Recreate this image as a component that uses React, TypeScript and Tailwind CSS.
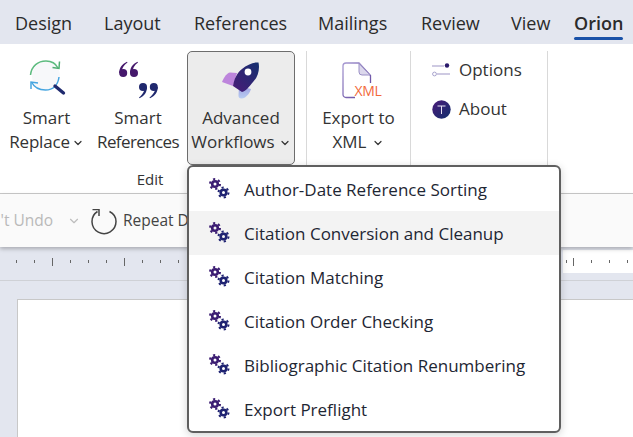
import { ChevronDown } from 'lucide-react';

const FONT = "font-['Open_Sans','Noto_Sans',sans-serif]";

const tabs = [
  { label: 'Design', cls: 'w-[89px]' },
  { label: 'Layout', cls: 'w-[90px]' },
  { label: 'References', cls: 'w-[124px]' },
  { label: 'Mailings', cls: 'w-[103px]' },
  { label: 'Review', cls: 'w-[90px]' },
  { label: 'View', cls: 'w-[63px]' },
];

const menuItems = [
  'Author-Date Reference Sorting',
  'Citation Conversion and Cleanup',
  'Citation Matching',
  'Citation Order Checking',
  'Bibliographic Citation Renumbering',
  'Export Preflight',
];

function Chevron({ className = 'ml-1' }: { className?: string }) {
  return <ChevronDown size={12} strokeWidth={2.4} className={`inline-block ${className}`} />;
}

function SmartReplaceIcon() {
  return (
    <svg width="40" height="40" viewBox="0 0 40 40">
      <circle cx="18" cy="18" r="14" fill="#f7f8fa" />
      <path d="M2.5 17C3.5 8 10 3 18 3c6 0 9.500 2 12 7" fill="none" stroke="#5dbb7f" strokeWidth="1.500" />
      <path d="M31.500 3.500 31 10.500 24.500 9.500" fill="none" stroke="#4fae72" strokeWidth="1.500" />
      <path d="M31 19c-1 8-6 13-13.500 13C11 32 6 29 3.500 24" fill="none" stroke="#46a5e0" strokeWidth="1.500" />
      <path d="M3 31 3 24 10 25" fill="none" stroke="#46a5e0" strokeWidth="1.500" />
      <path d="M27 28 35.500 35" stroke="#1f2a6e" strokeWidth="3.400" strokeLinecap="round" />
    </svg>
  );
}

function QuoteMark({ flip, fill }: { flip?: boolean; fill: string }) {
  return (
    <svg width="20" height="17" viewBox="0 0 20 17" style={{ transform: flip ? 'rotate(180deg)' : undefined }}>
      <circle cx="4.200" cy="12" r="4" fill={fill} />
      <path d="M8 .8C3 3 .2 7 .2 12H2.500C2.500 8 5 4 8.500 1.600Z" fill={fill} />
      <circle cx="15" cy="12" r="4" fill={fill} />
      <path d="M18.500 .8C13.500 3 11 7 11 12H13.300C13.300 8 15.500 4 19 1.600Z" fill={fill} />
    </svg>
  );
}

function RocketIcon() {
  return (
    <svg width="38" height="38" viewBox="0 0 38 38">
      <defs>
        <linearGradient id="rocketBody" x1="0" y1="1" x2="1" y2="0">
          <stop offset="0" stopColor="#4a1a78" />
          <stop offset="1" stopColor="#14306f" />
        </linearGradient>
        <linearGradient id="rocketWing" x1="0" y1="0" x2="0" y2="1">
          <stop offset="0" stopColor="#9d9fe0" />
          <stop offset="1" stopColor="#b9cdf2" />
        </linearGradient>
      </defs>
      <path d="M0 20C2 15 5 11 8 10.500L15 11 11 24Z" fill="#bd85dc" />
      <path d="M17 24 29 27C28 31 25 34 23 35.500 20 37 16 37 16.500 33Z" fill="url(#rocketWing)" />
      <path d="M36.500 .5C38 7 36 15 31 20 27 25 24 29 20 30L11 24C12 17 15 11 20 7 25 3 31 0 36.500 .5Z" fill="url(#rocketBody)" />
      <circle cx="26" cy="10" r="3.400" fill="#fff" />
    </svg>
  );
}

function XmlIcon() {
  return (
    <div className="relative w-[40px] h-[37px]">
      <svg width="30" height="37" viewBox="0 0 30 37" className="block">
        <defs>
          <linearGradient id="fileLine" x1="0" y1="0" x2="1" y2="1">
            <stop offset="0" stopColor="#a79ad2" />
            <stop offset="1" stopColor="#5b3f9a" />
          </linearGradient>
        </defs>
        <path d="M13 35.500H4a3 3 0 0 1-3-3V4a3 3 0 0 1 3-3h13l11.500 12.500V21" fill="none" stroke="url(#fileLine)" strokeWidth="1.300" />
        <path d="M17 1.500V10a3 3 0 0 0 3 3h8Z" fill="#dcd8ec" stroke="#9b90c6" strokeWidth="1" />
      </svg>
      <span className="absolute left-[13px] top-[20px] text-[14px] leading-[18px] tracking-[-0.3px] text-[#f2683a]">XML</span>
    </div>
  );
}

function OptionsIcon() {
  return (
    <svg width="18" height="14" viewBox="0 0 18 14">
      <path d="M0 3H12" stroke="#b3aed3" strokeWidth="1.300" />
      <circle cx="15" cy="2.500" r="2.200" fill="#2a1a6b" />
      <circle cx="2.500" cy="11" r="1.900" fill="#fff" stroke="#a8a3cd" strokeWidth="1" />
      <path d="M5 11H18" stroke="#b3aed3" strokeWidth="1.300" />
    </svg>
  );
}

function AboutIcon() {
  return (
    <svg width="19" height="19" viewBox="0 0 19 19">
      <defs>
        <linearGradient id="aboutFill" x1="0" y1="0" x2="1" y2="1">
          <stop offset="0" stopColor="#4a1a78" />
          <stop offset="1" stopColor="#12306e" />
        </linearGradient>
      </defs>
      <circle cx="9.500" cy="9.500" r="9.200" fill="url(#aboutFill)" />
      <path d="M5.500 6H13.500M9.500 6V14" stroke="#e6e3f2" strokeWidth="1" fill="none" />
    </svg>
  );
}

function GearsIcon() {
  return (
    <svg width="21" height="21" viewBox="0 0 21 21" className="mt-[-2px]">
      <g fill="none">
        <circle cx="6" cy="6" r="2.800" stroke="#3b1c72" strokeWidth="2.600" />
        <circle cx="6" cy="6" r="5" stroke="#3b1c72" strokeWidth="2" strokeDasharray="2.200 3.040" />
        <circle cx="14.500" cy="14.500" r="2.800" stroke="#1f2372" strokeWidth="2.600" />
        <circle cx="14.500" cy="14.500" r="5" stroke="#1f2372" strokeWidth="2" strokeDasharray="2.200 3.040" />
      </g>
    </svg>
  );
}

function RepeatIcon() {
  return (
    <svg width="26" height="26" viewBox="0 0 26 26">
      <path d="M18.500 2.500C22.500 4.500 25 8 25 12.500A12 12 0 1 1 6.500 2.500" fill="none" stroke="#444" strokeWidth="1.500" />
      <path d="M1.500 .5H8V7" fill="none" stroke="#444" strokeWidth="1.500" />
    </svg>
  );
}

function Tick({ tall }: { tall?: boolean }) {
  return <span className={tall ? 'w-px h-[8px] bg-[#666]' : 'w-px h-[3px] bg-[#666]'} />;
}

export default function App() {
  return (
    <div className={`${FONT} relative w-[633px] h-[437px] overflow-hidden bg-[#e3e6ef] text-[#2b2b2b]`}>
      {/* tabs */}
      <div className="h-[44px] flex items-center pl-[15px] pt-[2px] text-[18px]">
        {tabs.map((t) => (
          <span key={t.label} className={`${t.cls} whitespace-nowrap`}>{t.label}</span>
        ))}
        <div className="relative font-semibold whitespace-nowrap">
          Orion
          <span className="absolute left-0 right-0 bottom-[-3px] h-[3px] rounded-full bg-[#1a52a8]" />
        </div>
      </div>

      {/* ribbon */}
      <div className="h-[150px] bg-white border-b border-[#c9c9c9] flex pt-[7px] text-[17px] leading-[24px] text-center text-[#333]">
        <div className="w-[307px] flex flex-col border-r border-[#d9d9d9] h-[114px] pl-[4px]">
          <div className="flex gap-[3px] h-[114px] relative">
            <div className="w-[85px] flex flex-col items-center pt-[7px]">
              <div className="h-[48px] pl-[2px]"><SmartReplaceIcon /></div>
              <div>Smart</div>
              <div className="whitespace-nowrap tracking-[-0.2px]">Replace<Chevron className="ml-[2px]" /></div>
            </div>
            <div className="w-[92px] flex flex-col items-center pt-[10px]">
              <div className="h-[43px] w-[38px] relative">
                <div className="absolute left-0 top-0"><QuoteMark fill="#45186c" /></div>
                <div className="absolute left-[19px] top-[21px]"><QuoteMark flip fill="#20286e" /></div>
              </div>
              <div className="mt-[2px]">Smart</div>
              <div className="whitespace-nowrap tracking-[-0.6px]">References</div>
            </div>
            <div className="w-[108px] h-[114px] flex flex-col items-center bg-[#ececec] border border-[#6d6d6d] rounded-[5px] pt-[10px]">
              <div className="h-[43px]"><RocketIcon /></div>
              <div className="mt-[1px]">Advanced</div>
              <div className="whitespace-nowrap">Workflows<Chevron /></div>
            </div>
          </div>
          <div className="text-[15px] leading-[20px] mt-[4px] pr-[8px] w-[300px] text-[#333]">Edit</div>
        </div>
        <div className="w-[104px] h-[114px] flex flex-col items-center border-r border-[#d9d9d9] pt-[11px]">
          <div className="h-[43px] pl-[6px]"><XmlIcon /></div>
          <div className="mt-[1px]">Export to</div>
          <div className="whitespace-nowrap">XML<Chevron className="ml-[6px]" /></div>
        </div>
        <div className="w-[137px] h-[114px] border-r border-[#d9d9d9] pl-[21px] pt-[7px] flex flex-col gap-[15px] text-left">
          <div className="flex items-center gap-[9px] h-[24px]"><OptionsIcon />Options</div>
          <div className="flex items-center gap-[8px] h-[24px]"><AboutIcon />About</div>
        </div>
      </div>

      {/* quick toolbar */}
      <div className="h-[53px] bg-[#fafafa] shadow-[0_2px_4px_rgba(0,0,0,0.25)] relative flex items-center text-[15.5px] whitespace-nowrap overflow-hidden">
        <span className="text-[#b9b9b9] ml-[-9px] w-[76px]">n't Undo</span>
        <ChevronDown size={14} strokeWidth={2} className="text-[#bdbdbd]" />
        <div className="ml-[10px] mt-[2px]"><RepeatIcon /></div>
        <span className="ml-[6px] text-[#444]">Repeat Do</span>
      </div>

      {/* ruler */}
      <div className="h-[34px] border-b border-[#cfd1d6] flex items-center pb-[4px]">
        <div className="w-[563px] flex items-center">
          <div className="pl-[16px] flex items-center gap-[17px]">
            <Tick /><Tick /><Tick tall /><Tick /><Tick /><Tick /><Tick tall /><Tick /><Tick /><Tick />
          </div>
        </div>
        <div className="flex-1 h-[23px] bg-white flex items-center pl-[3px] gap-[6px]">
          <Tick />
          <Tick tall />
          <span className="w-[5px]" />
          <Tick />
          <span className="w-[5px]" />
          <Tick />
          <span className="w-[5px]" />
          <Tick />
        </div>
      </div>

      {/* page */}
      <div className="pl-[17px] pt-[18px]">
        <div className="w-[616px] h-[200px] bg-white border-l border-t border-[#c8c8c8]" />
      </div>

      {/* dropdown */}
      <div className="absolute left-[187px] top-[165px] w-[374px] h-[268px] bg-white border-2 border-[#5f5f5f] rounded-[6px] shadow-[0_2px_8px_rgba(0,0,0,0.18)]">
        {menuItems.map((item, i) => (
          <div
            key={item}
            className={`h-[44px] flex items-center pl-[20px] gap-[14px] text-[17px] text-[#1e2633] whitespace-nowrap ${i === 1 ? 'bg-[#f3f3f3]' : ''}`}
          >
            <GearsIcon />
            <span className="pt-[2px]">{item}</span>
          </div>
        ))}
      </div>
    </div>
  );
}
